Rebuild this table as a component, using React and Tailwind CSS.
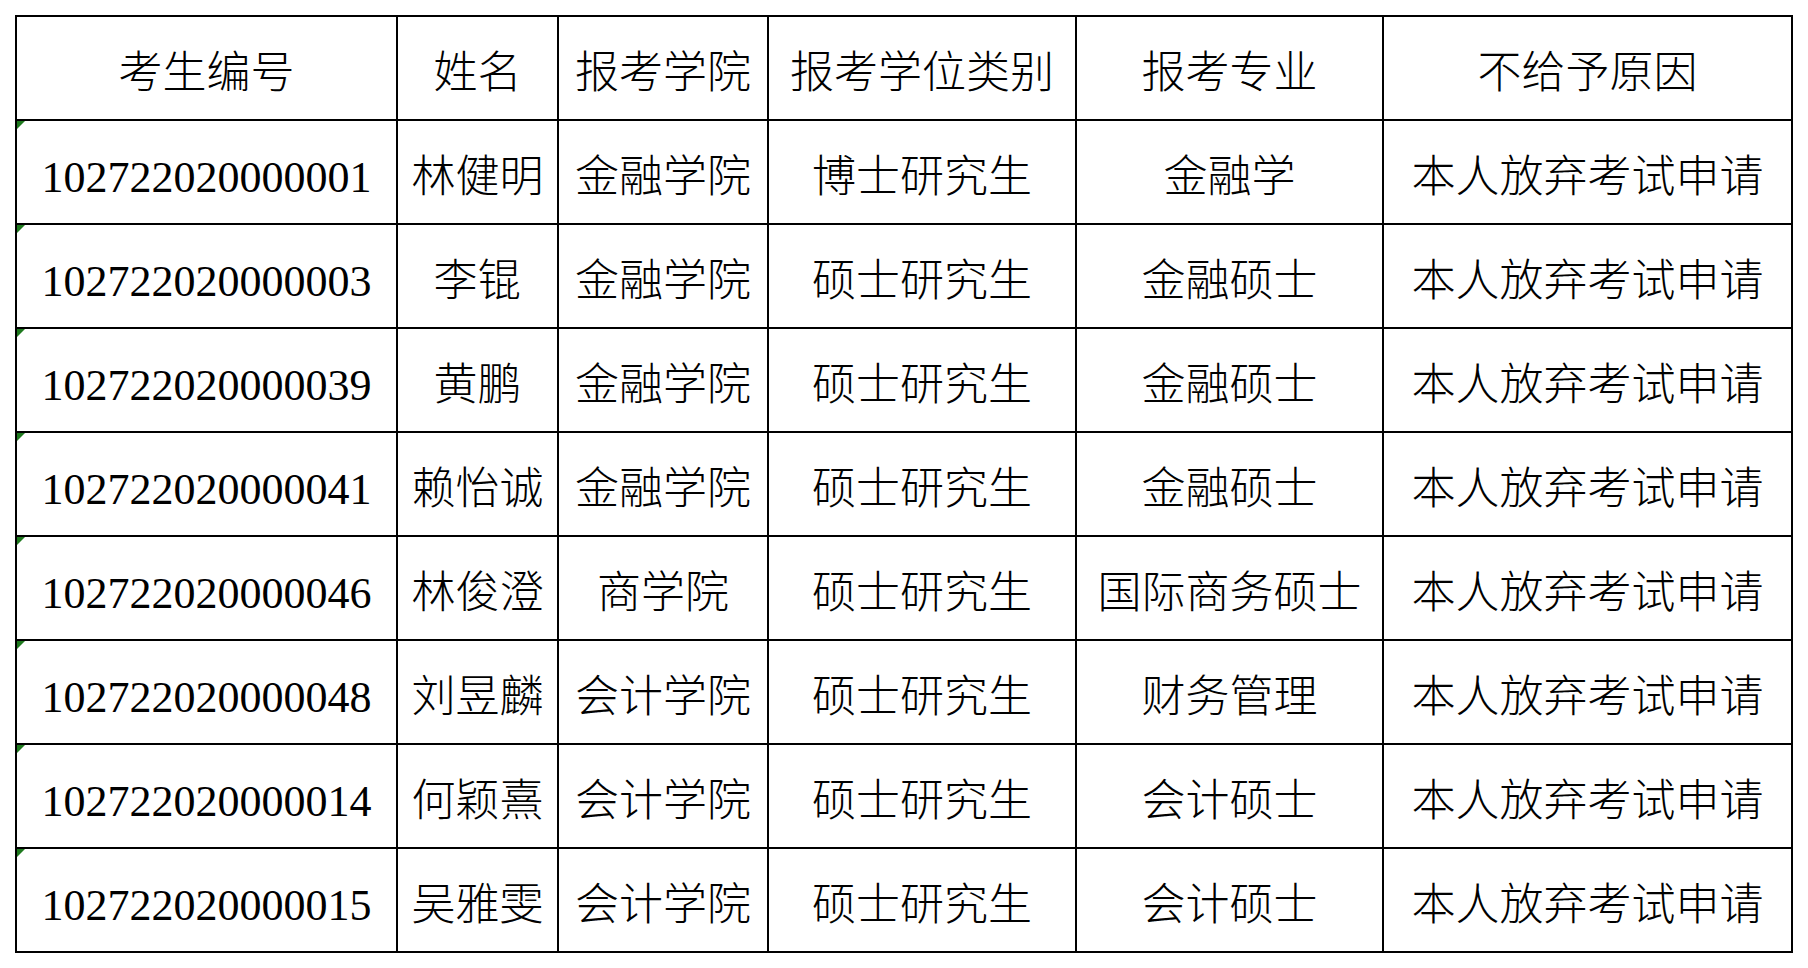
const headers = ["考生编号", "姓名", "报考学院", "报考学位类别", "报考专业", "不给予原因"];

const rows = [
  ["102722020000001", "林健明", "金融学院", "博士研究生", "金融学", "本人放弃考试申请"],
  ["102722020000003", "李锟", "金融学院", "硕士研究生", "金融硕士", "本人放弃考试申请"],
  ["102722020000039", "黄鹏", "金融学院", "硕士研究生", "金融硕士", "本人放弃考试申请"],
  ["102722020000041", "赖怡诚", "金融学院", "硕士研究生", "金融硕士", "本人放弃考试申请"],
  ["102722020000046", "林俊澄", "商学院", "硕士研究生", "国际商务硕士", "本人放弃考试申请"],
  ["102722020000048", "刘昱麟", "会计学院", "硕士研究生", "财务管理", "本人放弃考试申请"],
  ["102722020000014", "何颖熹", "会计学院", "硕士研究生", "会计硕士", "本人放弃考试申请"],
  ["102722020000015", "吴雅雯", "会计学院", "硕士研究生", "会计硕士", "本人放弃考试申请"],
];

const Cell = ({ children, marker }) => (
  <div className="relative h-[104px] border-r-2 border-b-2 border-black flex items-center justify-center pt-[11px] whitespace-nowrap">
    {/* little green error triangle, like in the spreadsheet */}
    {marker && (
      <span className="absolute left-0 top-0 w-0 h-0 border-t-[8px] border-r-[8px] border-t-[#1f7a1f] border-r-transparent" />
    )}
    {children}
  </div>
);

const App = () => {
  return (
    <div className="min-h-screen bg-white pt-[15px] pl-[15px] text-black">
      <div
        className="grid grid-cols-[381px_161px_210px_308px_307px_409px] w-max border-t-2 border-l-2 border-black text-[44px] font-light leading-none"
        style={{ fontFamily: '"Liberation Serif", "Noto Sans CJK SC", serif' }}
      >
        {headers.map((h) => (
          <Cell key={h}>{h}</Cell>
        ))}
        {rows.map((r) =>
          r.map((c, i) => (
            <Cell key={r[0] + i} marker={i === 0}>
              {c}
            </Cell>
          ))
        )}
      </div>
    </div>
  );
};

export default App;
